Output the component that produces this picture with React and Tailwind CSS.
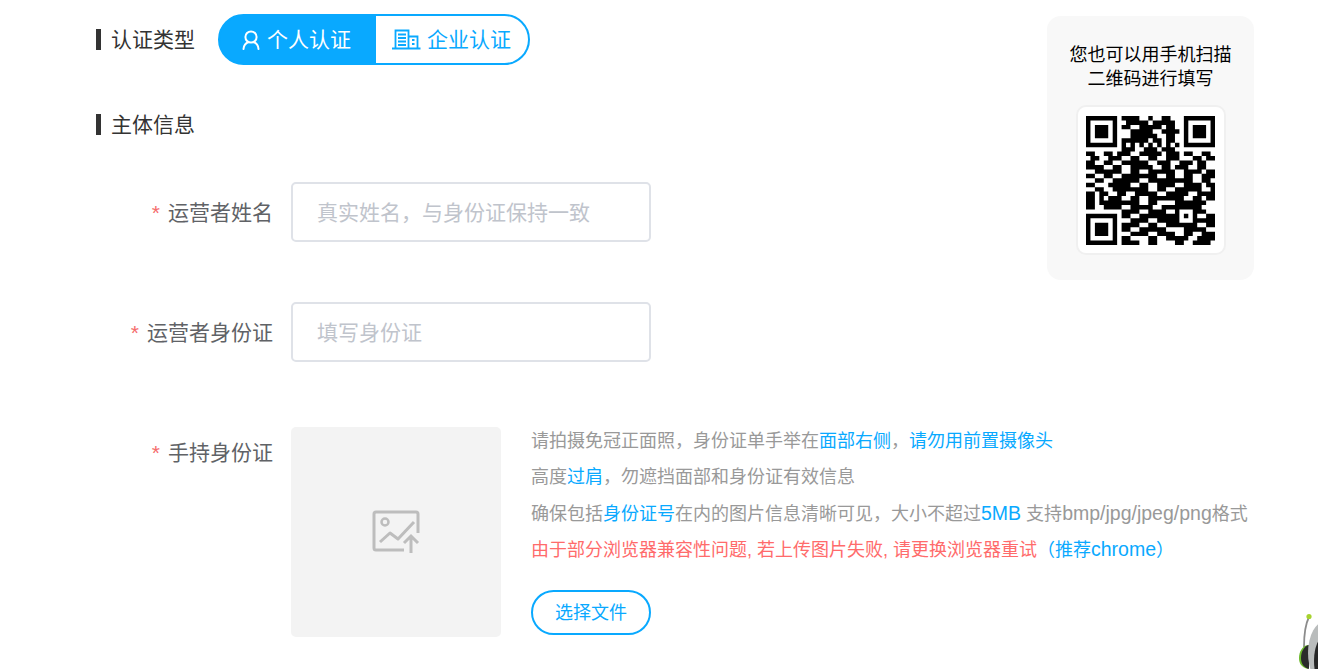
const qrRows = [
  '11111110111100100110001111111',
  '10000010011111011111001000001',
  '10111010110011111011001011101',
  '10111010001111100111101011101',
  '10111010001111110011001011101',
  '10000010111111011011001000001',
  '11111110101010101010101111111',
  '00000000111001110111000000000',
  '11001101110011111011101100110',
  '01100111001100110011100011011',
  '11001100111111001110011101100',
  '11110011001111100110111001100',
  '00111111001100111111001111011',
  '11001100111111110011001100111',
  '00110011111100111111111100110',
  '11000111110011001111001111011',
  '00110011111111001100111111001',
  '11011001100111110011111001111',
  '11010111001100111111110011011',
  '11011111111100110000111111100',
  '11001111001111100111111111000',
  '00000000111100111100100011100',
  '11111110110011111111101010011',
  '10000010001111001111100011111',
  '10111010111100110011111110011',
  '10111010110011111100001111100',
  '10111010001111001111001100111',
  '10000010110000110011111001111',
  '11111110111100110000110011110',
]

// one path, so neighbouring modules don't get seams between them
const qrPath = qrRows
  .map((row, y) =>
    row
      .split('')
      .map((cell, x) => (cell === '1' ? `M${x} ${y}h1v1h-1z` : ''))
      .join('')
  )
  .join('')

const QrCode = () => (
  <svg width="129" height="129" viewBox="0 0 29 29">
    <path d={qrPath} fill="#000" />
  </svg>
)

const UserIcon = () => (
  <svg width="20" height="20" viewBox="0 0 20 20" fill="none" stroke="#fff" strokeWidth="2">
    <circle cx="10" cy="7" r="5.6" />
    <path d="M2.5 19c.3-3.6 2.4-6 5-7M17.5 19c-.3-3.6-2.4-6-5-7" strokeLinecap="round" />
  </svg>
)

const BuildingIcon = () => (
  <svg width="29" height="21" viewBox="0 0 29 21" fill="none" stroke="#09a9ff" strokeWidth="1.8">
    <path d="M0 19.5h28.5" strokeWidth="2" />
    <path d="M3.5 19V1.5h13V19M16.5 7.5h9V19" />
    <path d="M6 5.5h8M6 9h8M6 12.5h8M6 16h8M20 11h2.5M20 15h2.5" />
  </svg>
)

const UploadIcon = () => (
  <svg width="48" height="44" viewBox="0 0 48 44" fill="none" stroke="#bdbdbd" strokeWidth="3">
    <path d="M46 23V4a2 2 0 0 0-2-2H4a2 2 0 0 0-2 2v34a2 2 0 0 0 2 2h28" />
    <circle cx="13" cy="12" r="3.5" strokeWidth="2.5" />
    <path d="M8 32l10-9 8 6 16-17" strokeLinejoin="round" />
    <path d="M39 43V26M32 33l7-7 7 7" />
  </svg>
)

const Robot = () => (
  <svg className="absolute right-0 bottom-0" width="22" height="58" viewBox="0 0 22 58" fill="none">
    <path d="M13 6C9 14 8 24 8 36" stroke="#8c8c8c" strokeWidth="1.8" />
    <circle cx="13" cy="5.5" r="2.6" fill="#a7d32f" />
    <path d="M12 34C6 35 3 41 3 47c0 5 2 9 9 11z" fill="#6cb92c" />
    <path d="M13 34C8 35 5 41 5 47c0 5 2 9 8 11z" fill="#2b2b2b" />
    <ellipse cx="30" cy="42" rx="18" ry="32" fill="#b9bcbc" />
    <ellipse cx="28" cy="50" rx="10" ry="24" fill="#262626" />
  </svg>
)

const SectionTitle = ({ children }) => (
  <div className="flex items-center gap-[10px] text-[21px] leading-[21px] text-[#333]">
    <span className="w-[5px] h-[21px] bg-[#333]"></span>
    {children}
  </div>
)

const FieldLabel = ({ children, height }) => (
  <label className={`w-[177px] mr-[18px] pt-[1px] shrink-0 text-right text-[21px] text-[#606266] ${height}`}>
    <span className="text-[#f56c6c] mr-[8px]">*</span>
    {children}
  </label>
)

const App = () => {
  return (
    <div className="relative h-[669px] overflow-hidden bg-white pl-[96px] pt-[14px] font-['Liberation_Sans','Noto_Sans_CJK_SC',sans-serif]">
      <div className="flex justify-between pr-[64px]">
        <div>
          <div className="flex items-center">
            <SectionTitle>认证类型</SectionTitle>
            <div className="ml-[23px] flex h-[51px] w-[312px] rounded-full border-2 border-[#09a9ff] bg-[#09a9ff] text-[21px]">
              <div className="flex w-[156px] items-center gap-[6px] pl-[21px] text-white">
                <UserIcon />
                个人认证
              </div>
              <div className="flex flex-1 items-center gap-[6px] rounded-r-full bg-white pl-[16px] text-[#09a9ff]">
                <BuildingIcon />
                企业认证
              </div>
            </div>
          </div>

          <div className="mt-[49px]">
            <SectionTitle>主体信息</SectionTitle>
          </div>

          <div className="mt-[47px] flex">
            <FieldLabel height="leading-[60px] h-[60px]">运营者姓名</FieldLabel>
            <input
              placeholder={'真实姓名\uFF0C与身份证保持一致'}
              className="h-[60px] w-[360px] rounded-[5px] border-2 border-[#dfe2e8] px-6 pt-[2px] text-[21px] outline-none placeholder:text-[#c0c4cc]"
            />
          </div>

          <div className="mt-[60px] flex">
            <FieldLabel height="leading-[60px] h-[60px]">运营者身份证</FieldLabel>
            <input
              placeholder="填写身份证"
              className="h-[60px] w-[360px] rounded-[5px] border-2 border-[#dfe2e8] px-6 pt-[2px] text-[21px] outline-none placeholder:text-[#c0c4cc]"
            />
          </div>
        </div>

        {/* QR card */}
        <div className="mt-[2px] flex h-[264px] w-[207px] flex-col items-center rounded-[14px] bg-[#f8f8f8] pt-[27px]">
          <p className="text-center text-[18px] leading-[24px] text-black">
            您也可以用手机扫描
            <br />
            二维码进行填写
          </p>
          <div className="mt-[14px] flex h-[150px] w-[150px] items-center justify-center rounded-[10px] border-2 border-[#f0f0f0] bg-white">
            <QrCode />
          </div>
        </div>
      </div>

      <div className="mt-[65px] flex">
        <FieldLabel height="leading-[50px] h-[50px]">手持身份证</FieldLabel>
        <div className="flex h-[210px] w-[210px] shrink-0 items-center justify-center rounded-[5px] bg-[#f3f3f3]">
          <UploadIcon />
        </div>
        <div className="-mt-[4px] ml-[30px] whitespace-nowrap text-[18px] leading-[36px] text-[#999]">
          <p className="h-[36px]">
            请拍摄免冠正面照&#xFF0C;身份证单手举在<span className="text-[#09a9ff]">面部右侧</span>&#xFF0C;
            <span className="text-[#09a9ff]">请勿用前置摄像头</span>
          </p>
          <p className="h-[36px]">
            高度<span className="text-[#09a9ff]">过肩</span>&#xFF0C;勿遮挡面部和身份证有效信息
          </p>
          <p className="h-[36px]">
            确保包括<span className="text-[#09a9ff]">身份证号</span>在内的图片信息清晰可见&#xFF0C;大小不超过
            <span className="text-[19.5px] text-[#09a9ff]">5MB</span> 支持<span className="text-[19.5px]">bmp/jpg/jpeg/png</span>格式
          </p>
          <p className="h-[36px] text-[#ff6b6b]">
            由于部分浏览器兼容性问题, 若上传图片失败, 请更换浏览器重试
            <span className="text-[#09a9ff]">&#xFF08;推荐<span className="text-[19.5px]">chrome</span>&#xFF09;</span>
          </p>
          <button className="mt-[23px] block h-[45px] w-[120px] rounded-full border-2 border-[#09a9ff] text-[18px] leading-none text-[#09a9ff]">
            选择文件
          </button>
        </div>
      </div>

      <Robot />
    </div>
  )
}

export default App
